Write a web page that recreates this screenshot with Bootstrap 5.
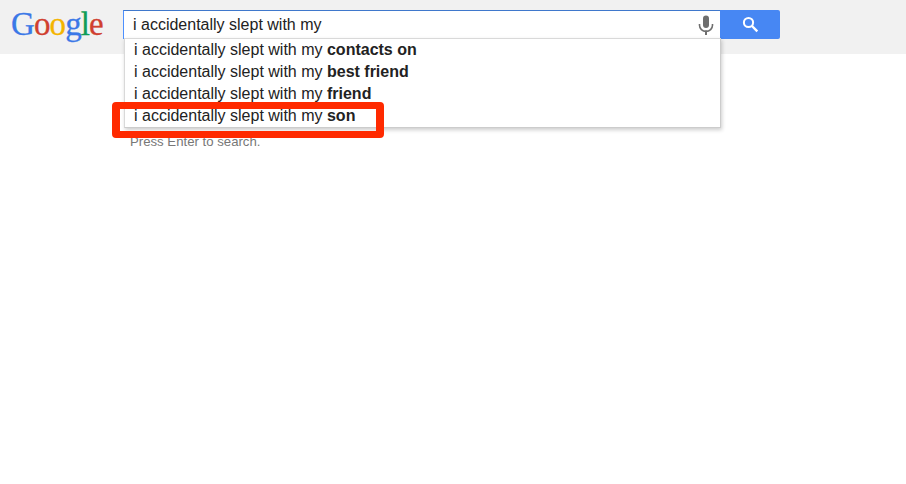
<!DOCTYPE html>
<html lang="en">
<head>
<meta charset="utf-8">
<title>Google</title>
<link rel="stylesheet" href="https://cdn.jsdelivr.net/npm/bootstrap@5.3.0/dist/css/bootstrap.min.css">
<style>
html, body { background: #fff; font-family: "Liberation Sans", Arial, sans-serif; color: #222; }
.gbar { height: 54px; background: #f1f1f1; padding: 10px 0 0 11px; }
.glogo { width: 112px; height: 32px; margin-top: -5px; font-family: "Liberation Serif", serif; font-size: 33px; line-height: 38px; letter-spacing: -.9px; -webkit-text-stroke: .3px currentColor; }
.c-b { color: #3b78e7; } .c-r { color: #d0402f; } .c-y { color: #f4b400; } .c-g { color: #0f9d58; }
.gsearch { position: relative; width: 657px; }
.gfield { width: 597px; height: 29px; background: #fff; border: 1px solid #4d90fe; border-top-color: #3f78cc; border-right: 0; padding: 0 0 0 9px; font-size: 16px; line-height: 27px; color: #222; }
.gbtn { width: 60px; height: 29px; background: #4787f3; border-radius: 0 2px 2px 0; }
.gmic { position: absolute; left: 575px; top: 5px; }
.gsuggest { position: absolute; left: 1px; top: 28px; width: 597px; height: 90px; background: #fff; border: 1px solid #ccc; border-top-color: #d9d9d9; border-left-color: #d9d9d9; box-shadow: 1px 2px 4px rgba(0,0,0,.2); padding-left: 9px; font-size: 16px; line-height: 22px; color: #222; z-index: 2; }
.grow { height: 22px; white-space: nowrap; }
.ghint { margin: 80px 0 0 130px; font-size: 13.2px; line-height: 15px; color: #777; }
.redmark { position: absolute; left: 112px; top: 102px; width: 272px; height: 36px; border: 8px solid #ff2a00; border-width: 7px 8px 7px 8px; border-radius: 4px; z-index: 3; }
</style>
</head>
<body>
<div class="gbar d-flex">
  <div class="glogo"><span class="c-b">G</span><span class="c-r">o</span><span class="c-y">o</span><span class="c-b">g</span><span class="c-g">l</span><span class="c-r">e</span></div>
  <div class="gsearch d-flex">
    <div class="gfield">i accidentally slept with my</div>
    <div class="gbtn d-flex align-items-center justify-content-center">
      <svg width="17" height="17" viewBox="0 0 17 17" aria-hidden="true"><circle cx="6.5" cy="6.5" r="4.6" fill="none" stroke="#fff" stroke-width="2"/><path d="M10 10l5.3 5.3" stroke="#fff" stroke-width="2.4" fill="none"/></svg>
    </div>
    <svg class="gmic" width="16" height="20" viewBox="0 0 16 20" aria-hidden="true"><rect x="5" y="0.5" width="6" height="12.5" rx="3" fill="#6e6e6e"/><path d="M1.5 9v1.2a6.5 6.2 0 0 0 13 0V9" fill="none" stroke="#6e6e6e" stroke-width="1.6"/><rect x="7" y="15.5" width="2" height="4.5" fill="#6e6e6e"/></svg>
    <div class="gsuggest">
      <div class="grow">i accidentally slept with my <b>contacts on</b></div>
      <div class="grow">i accidentally slept with my <b>best friend</b></div>
      <div class="grow">i accidentally slept with my <b>friend</b></div>
      <div class="grow">i accidentally slept with my <b>son</b></div>
    </div>
  </div>
</div>
<p class="ghint">Press Enter to search.</p>
<div class="redmark"></div>
</body>
</html>
